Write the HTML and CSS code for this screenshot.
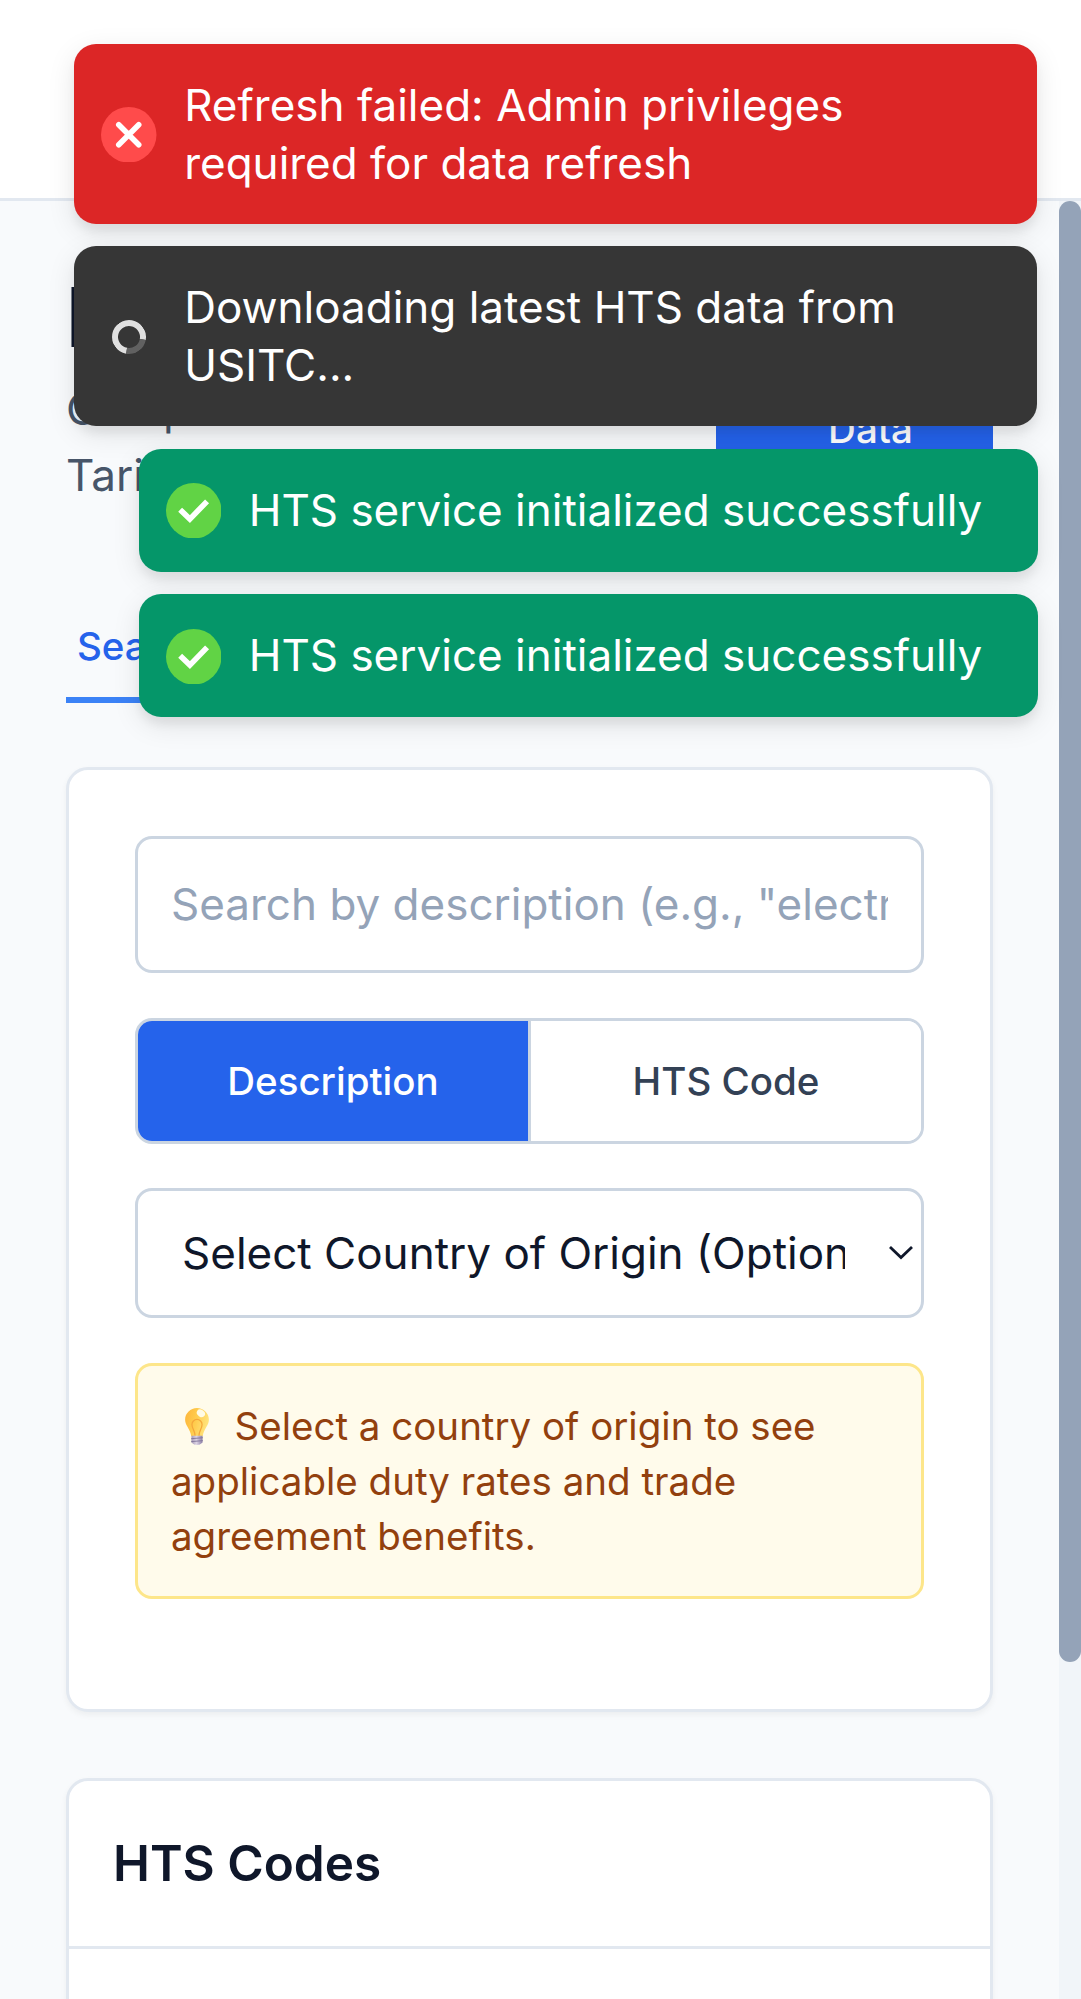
FILE: index.html
```html
<!DOCTYPE html>
<html lang="en">
<head>
<meta charset="utf-8">
<title>HTS Codes</title>
<link rel="stylesheet" href="styles.css">
</head>
<body>
<header class="topbar">
  <svg class="menu-icon" viewBox="0 0 52 52"><path d="M2 9.500h48M2 26h48M2 42.500h48" stroke="#475569" stroke-width="4" fill="none"/></svg>
</header>
<div class="viewport">
  <main class="content">
    <section class="page-head">
      <div class="page-titles">
        <h1 class="page-title">HTS</h1>
        <p class="page-subtitle">Comprehensive Harmonized<br>Tariff Schedule</p>
      </div>
      <button class="refresh-btn">
        <svg class="refresh-icon" viewBox="0 0 24 24" fill="none" stroke="#fff" stroke-width="2"><path d="M3 12a9 9 0 0 1 15-6.700L21 8M21 3v5h-5M21 12a9 9 0 0 1-15 6.700L3 16M3 21v-5h5"/></svg>
        <span>Refresh<br>Data</span>
      </button>
    </section>
    <nav class="tabs"><a class="tab tab-active">Search</a></nav>
    <section class="card search-card">
      <input class="search-input" type="text" placeholder="Search by description (e.g., &quot;electronics&quot;)">
      <div class="toggle">
        <button class="toggle-btn toggle-on">Description</button>
        <button class="toggle-btn">HTS Code</button>
      </div>
      <div class="select">
        <span class="select-text">Select Country of Origin (Optional)</span>
        <svg class="chevron" viewBox="0 0 24 16"><path d="M1 2l11 10.500L23 2" fill="none" stroke="#0f172a" stroke-width="2.800"/></svg>
      </div>
      <p class="hint"><svg class="bulb" viewBox="0 0 26 40">
          <defs>
            <linearGradient id="glass" x1="0" y1="0" x2="1" y2="0.300"><stop offset="0" stop-color="#fdb43a"/><stop offset="0.500" stop-color="#ffcb4c"/><stop offset="1" stop-color="#ffe27a"/></linearGradient>
            <linearGradient id="cap" x1="0" y1="0" x2="1" y2="0"><stop offset="0" stop-color="#a79ab8"/><stop offset="0.450" stop-color="#dcd3e4"/><stop offset="1" stop-color="#8d80a8"/></linearGradient>
          </defs>
          <path d="M13 1C6.300 1 .8 6.300.8 13c0 6 5.200 9 6.300 17h11.800C20 22 25.200 19 25.200 13 25.200 6.300 19.700 1 13 1z" fill="url(#glass)"/>
          <ellipse cx="17" cy="6.500" rx="4.500" ry="3.500" fill="#fffbe5" transform="rotate(35 17 6.500)"/>
          <path d="M11 29.500c0-5-3.200-7.500-3.200-11.500a5.200 5.200 0 0 1 10.400 0c0 4-3.200 6.500-3.200 11.500" fill="none" stroke="#f5a83b" stroke-width="1.300"/>
          <path d="M7.300 29.500h11.400v7c-1.700 1-2 2.500-5.700 2.500s-4-1.500-5.700-2.500z" fill="url(#cap)"/>
          <path d="M7 32.500l12-1M7 35.500l12-1" stroke="#7f7298" stroke-width="0.900"/>
        </svg>Select a country of origin to see<br>applicable duty rates and trade<br>agreement benefits.</p>
    </section>
    <section class="card codes-card">
      <h2 class="codes-title">HTS Codes</h2>
    </section>
  </main>
  <div class="scroll-track"><div class="scroll-thumb"></div></div>
</div>
<div class="toaster">
  <div class="toast toast-wide toast-error">
    <svg class="toast-icon" viewBox="0 0 20 20"><circle cx="10" cy="10" r="10" fill="#ff4b4b"/><path d="M6.400 6.400l7.200 7.200M13.600 6.400l-7.200 7.200" stroke="#fff" stroke-width="2" stroke-linecap="round"/></svg>
    <p class="toast-text">Refresh failed: Admin privileges<br>required for data refresh</p>
  </div>
  <div class="toast toast-wide toast-loading">
    <div class="spinner-box"><div class="spinner"></div></div>
    <p class="toast-text">Downloading latest HTS data from<br>USITC...</p>
  </div>
  <div class="toast toast-success">
    <svg class="toast-icon" viewBox="0 0 20 20"><circle cx="10" cy="10" r="10" fill="#61d345"/><path d="M5.100 9.600l3.500 3.400L14.800 6.600" stroke="#fff" stroke-width="2" fill="none"/></svg>
    <p class="toast-text">HTS service initialized successfully</p>
  </div>
  <div class="toast toast-success">
    <svg class="toast-icon" viewBox="0 0 20 20"><circle cx="10" cy="10" r="10" fill="#61d345"/><path d="M5.100 9.600l3.500 3.400L14.800 6.600" stroke="#fff" stroke-width="2" fill="none"/></svg>
    <p class="toast-text">HTS service initialized successfully</p>
  </div>
</div>
</body>
</html>
```
FILE: styles.css
```css
* {
  box-sizing: border-box;
  margin: 0;
  padding: 0;
}

body {
  position: relative;
  display: flex;
  flex-direction: column;
  width: 1081px;
  height: 1999px;
  overflow: hidden;
  background: #f8fafc;
  color: #0f172a;
  font-family: Inter, "Liberation Sans", sans-serif;
  font-size: 44px;
}

button, input {
  font-family: inherit;
}

.topbar {
  display: flex;
  align-items: center;
  flex: none;
  height: 201px;
  padding-left: 71.5px;
  background: #fff;
  border-bottom: 3px solid #e2e8f0;
}

.menu-icon {
  width: 52px;
  height: 52px;
}

.viewport {
  display: flex;
  flex: 1;
  min-height: 0;
}

.content {
  flex: 1;
  min-width: 0;
  padding: 66.5px 66px 0 66px;
  overflow: hidden;
}

.page-head {
  display: flex;
  justify-content: space-between;
  height: 333px;
}

.page-title {
  font-size: 83px;
  font-weight: 700;
  line-height: 99px;
}

.page-subtitle {
  margin-top: 9px;
  color: #475569;
  line-height: 66.5px;
  white-space: nowrap;
}

.refresh-btn {
  display: flex;
  align-items: center;
  justify-content: center;
  gap: 10px;
  flex: none;
  width: 277px;
  height: 156px;
  margin-top: 56px;
  border: 0;
  border-radius: 17px;
  background: #2563eb;
  color: #fff;
  font-size: 38.5px;
  font-weight: 500;
  line-height: 55.4px;
}

.refresh-icon {
  width: 22px;
  height: 22px;
}

.tabs {
  display: flex;
  height: 102px;
}

.tab {
  padding: 18px 11px 0;
  border-bottom: 6px solid transparent;
  font-size: 38.5px;
  font-weight: 500;
  line-height: 55.4px;
}

.tab-active {
  border-color: #3b82f6;
  color: #2563eb;
}

.card {
  background: #fff;
  border: 3px solid #e2e8f0;
  border-radius: 22px;
  box-shadow: 0 3px 6px rgba(0, 0, 0, 0.05);
}

.search-card {
  display: flex;
  flex-direction: column;
  gap: 44.7px;
  width: 927px;
  height: 945px;
  margin-top: 64.5px;
  padding: 66px;
}

.search-input {
  flex: none;
  width: 789px;
  height: 137px;
  padding: 0 33px 2px;
  border: 3px solid #cbd5e1;
  border-radius: 17px;
  background: #fff;
  font-size: 44px;
}

.search-input::placeholder {
  color: #94a3b8;
  opacity: 1;
}

.toggle {
  display: flex;
  flex: none;
  width: 789px;
  height: 126px;
  overflow: hidden;
  border: 3px solid #cbd5e1;
  border-radius: 17px;
}

.toggle-btn {
  flex: 1;
  border: 0;
  background: #fff;
  color: #334155;
  font-size: 38.5px;
  font-weight: 500;
}

.toggle-on {
  background: #2563eb;
  color: #fff;
}

.toggle-btn + .toggle-btn {
  border-left: 3px solid #cbd5e1;
}

.select {
  display: flex;
  align-items: center;
  justify-content: space-between;
  flex: none;
  width: 789px;
  height: 130px;
  padding: 0 8px 0 44px;
  border: 3px solid #cbd5e1;
  border-radius: 17px;
}

.select-text {
  width: 663px;
  overflow: hidden;
  white-space: nowrap;
}

.chevron {
  width: 24px;
  height: 16px;
}

.hint {
  flex: none;
  width: 789px;
  height: 236px;
  padding: 32.5px 33px;
  border: 3px solid #fde68a;
  border-radius: 17px;
  background: #fffbeb;
  color: #92400e;
  font-size: 38.5px;
  line-height: 55px;
  white-space: nowrap;
}

.bulb {
  width: 26px;
  height: 39px;
  margin: 0 24.5px 0 13px;
  vertical-align: -6px;
}

.codes-card {
  width: 927px;
  height: 400px;
  margin-top: 66px;
}

.codes-title {
  padding: 44px;
  border-bottom: 3px solid #e2e8f0;
  font-size: 49.5px;
  font-weight: 600;
  line-height: 77.3px;
}

.scroll-track {
  flex: none;
  width: 22px;
  background: #f1f5f9;
}

.scroll-thumb {
  height: 1461px;
  border-radius: 11px;
  background: #94a3b8;
}

.toaster {
  position: absolute;
  top: 44px;
  right: 43px;
  display: flex;
  flex-direction: column;
  align-items: flex-end;
  gap: 22.3px;
}

.toast {
  display: flex;
  align-items: center;
  width: 899.5px;
  height: 123.3px;
  padding-left: 27px;
  border-radius: 22px;
  color: #fff;
  box-shadow: 0 8px 28px rgba(0, 0, 0, 0.1), 0 8px 8px rgba(0, 0, 0, 0.05);
}

.toast-wide {
  width: 963px;
  height: 180px;
  margin-right: 1px;
}

.toast-error {
  background: #dc2626;
}

.toast-loading {
  background: #363636;
}

.toast-success {
  background: #059669;
}

.toast-icon {
  flex: none;
  width: 55.5px;
  height: 55.5px;
  margin-top: 1px;
}

.toast-text {
  margin-left: 27.7px;
  line-height: 58px;
  white-space: nowrap;
}

.toast:last-child .toast-text {
  margin-bottom: 2px;
}

.spinner-box {
  display: flex;
  align-items: center;
  justify-content: center;
  flex: none;
  width: 55.5px;
  margin-top: 1px;
}

.spinner {
  width: 34px;
  height: 34px;
  border: 6px solid #e0e0e0;
  border-right-color: #616161;
  border-radius: 50%;
  transform: rotate(55deg);
}
```
